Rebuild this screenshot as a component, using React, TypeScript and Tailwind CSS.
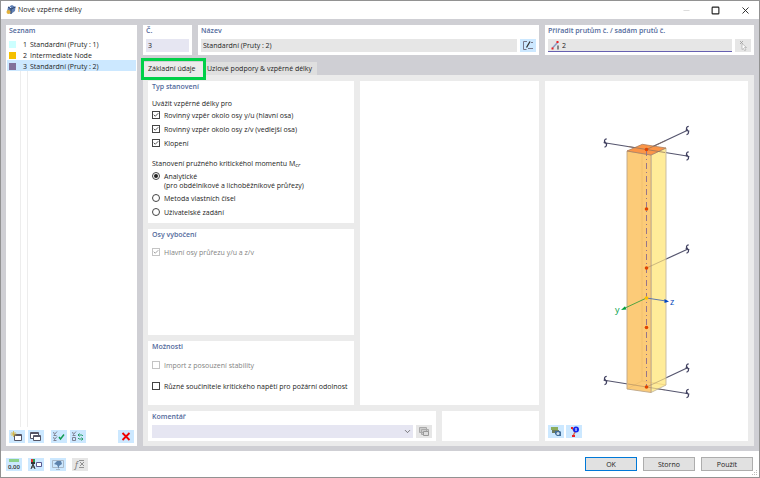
import type { ReactNode } from "react";
import { Check, ChevronDown, Minus, Square, X } from "lucide-react";

const members = [
  { id: 1, name: "Standardní (Pruty : 1)", color: "bg-[#ccffff]" },
  { id: 2, name: "Intermediate Node", color: "bg-[#f5c000]" },
  { id: 3, name: "Standardní (Pruty : 2)", color: "bg-[#83729a]" },
];

function Heading({ children }: { children: ReactNode }) {
  return <h2 className="font-semibold leading-[12px] text-[#52699b]">{children}</h2>;
}

function IconButton({ label, disabled, children }: { label: string; disabled?: boolean; children: ReactNode }) {
  return (
    <button
      aria-label={label}
      disabled={disabled}
      className="flex h-[13px] w-[16px] shrink-0 items-center justify-center bg-[#cce8ff] disabled:bg-[#e6e6e6]"
    >
      <svg viewBox="0 0 16 13" className="h-[13px] w-[16px]" fill="none">
        {children}
      </svg>
    </button>
  );
}

function CheckField({ label, checked, disabled }: { label: string; checked?: boolean; disabled?: boolean }) {
  return (
    <label className={disabled ? "flex h-[14px] items-center gap-[4px] text-[#838383]" : "flex h-[14px] items-center gap-[4px]"}>
      <span className="relative flex">
        <input
          type="checkbox"
          defaultChecked={checked}
          disabled={disabled}
          className="peer size-[8px] appearance-none border border-[#444] bg-white disabled:border-[#c4c4c4]"
        />
        <Check
          strokeWidth={3}
          className="pointer-events-none absolute inset-[1px] size-[6px] opacity-0 peer-checked:opacity-100"
        />
      </span>
      {label}
    </label>
  );
}

function RadioField({ label, checked }: { label: string; checked?: boolean }) {
  return (
    <label className="flex h-[14px] items-center gap-[4px]">
      <span className="relative flex">
        <input
          type="radio"
          name="moment"
          defaultChecked={checked}
          className="peer size-[8px] appearance-none rounded-full border border-[#444] bg-white"
        />
        <span className="pointer-events-none absolute inset-[2px] rounded-full bg-[#222] opacity-0 peer-checked:opacity-100" />
      </span>
      {label}
    </label>
  );
}

// Squiggle that closes a cut-off member
function BreakMark({ x, y }: { x: number; y: number }) {
  return (
    <path
      transform={`translate(${x} ${y})`}
      d="M1.2-4.2C-1-4-1.6-2-.4-.8L.4 .2C1.6 1.6 1 3.8-1 4.200M-1.800-.6L1.800 .8"
      stroke="#414160"
      strokeWidth="1.300"
    />
  );
}

function Preview() {
  return (
    <svg viewBox="545 81 203 340" className="w-full" fill="none" role="img" aria-label="Prut">
      <g stroke="#55556e" strokeWidth="1.200">
        <path d="M606 143L687 156M646.500 149.500L687 130.500" />
        <path d="M646.500 268L688 249" />
        <path d="M606 380.500L687 393.500M646.500 387L687 368" />
      </g>
      <path d="M651 155L666 148V385L651 392.500Z" fill="#ffeb94" fillOpacity=".95" stroke="#c4b8a0" strokeWidth=".9" />
      <path d="M627 151L651 155V392.500L627 389Z" fill="#fcc871" fillOpacity=".95" stroke="#bda688" strokeWidth=".9" />
      <path d="M642 145V381L627 389M642 381L666 385" stroke="#e0b060" strokeOpacity=".6" strokeWidth=".6" />
      <path d="M627 151L642.300 144.300L666 148L651 155Z" fill="#fb9547" stroke="#a98062" strokeWidth=".8" />
      <g stroke="#8a7060" strokeWidth=".7">
        <path d="M628 146.500L665 152.500M646.500 149.500L666 140.500" />
        <path d="M646.500 268L666 259M628 384L665 390M646.500 387L666 378" strokeOpacity=".55" />
      </g>
      <path d="M646.500 150V387" stroke="#97758a" strokeWidth="1" strokeDasharray="6 3 1 3" />
      <BreakMark x={605.5} y={143} />
      <BreakMark x={687.5} y={130.5} />
      <BreakMark x={687.5} y={156} />
      <BreakMark x={687.5} y={249} />
      <BreakMark x={605.5} y={380.5} />
      <BreakMark x={687.5} y={368} />
      <BreakMark x={687.5} y={393.5} />
      <path d="M646.500 298L624 308.500" stroke="#3f9f3a" strokeWidth=".9" />
      <path d="M621 310L625 306.200L626.400 309.600Z" fill="#00a03c" />
      <path d="M646.500 298L666 301" stroke="#4a6ab0" strokeWidth=".9" />
      <path d="M669 301.500L664.500 299V303Z" fill="#0044c0" />
      {[149.5, 209, 268, 327.5, 387].map((y) => (
        <circle key={y} cx="646.500" cy={y} r="1.800" fill="#e04400" />
      ))}
      <circle cx="646.500" cy="298" r="1.800" fill="#fbc000" />
      <text x="615" y="313" fontSize="9" fill="#00a04a">y</text>
      <text x="670" y="305" fontSize="9" fill="#0046b8">z</text>
    </svg>
  );
}

export default function App() {
  return (
    <main className="flex min-h-screen flex-col border border-[#929292] bg-white font-['Open_Sans','Noto_Sans',sans-serif] text-[7px] leading-[9px] text-[#1c1c1c]">
      <header className="flex h-[18px] items-center pl-[5px] pr-[8px]">
        <svg viewBox="0 0 10 10" className="mr-[2px] size-[10px]">
          <path d="M2 2L6 0L9.500 2L9 6L5 9L1 7Z" fill="#6181b5" />
          <path d="M2 2L5 4L9.500 2M5 4V9" stroke="#30466e" fill="none" />
          <circle cx="2.500" cy="7" r="2" fill="#e4b23a" />
          <path d="M3 1L5 3" stroke="#d4e3f6" />
        </svg>
        <h1 className="leading-[12px]">Nové vzpěrné délky</h1>
        <div className="ml-auto flex items-center gap-[20px]">
          <button aria-label="Minimalizovat" disabled><Minus size={9} strokeWidth={2} color="#d0d0d0" /></button>
          <button aria-label="Maximalizovat"><Square size={9} strokeWidth={3} color="#222" /></button>
          <button aria-label="Zavřít"><X size={11} strokeWidth={2} color="#222" /></button>
        </div>
      </header>

      <div className="flex flex-1 gap-[6px] bg-[#cfcfd4] px-[5px] pb-[5px] pt-[6px]">
        <aside className="flex w-[131px] shrink-0 flex-col bg-white">
          <div className="px-[3px]"><Heading>Seznam</Heading></div>
          <ul className="mx-px mt-px flex flex-1 flex-col">
            {members.map((m) => (
              <li key={m.id}>
                <button
                  aria-pressed={m.id === 3}
                  className="flex h-[11px] w-full items-center pl-[2px] pt-px text-left aria-pressed:bg-[#cce8ff]"
                >
                  <span className={`${m.color} size-[7px]`} />
                  <span className="w-[11px] text-right">{m.id}</span>
                  <span className="ml-[3px]">{m.name}</span>
                </button>
              </li>
            ))}
            <li aria-hidden className="ml-[13px] w-[8px] flex-1 border-x border-[#ededed]" />
          </ul>
          <div className="flex items-center gap-[3px] px-[3px] pb-[3px] pt-[3px]">
            <IconButton label="Nový">
              <path d="M5.500 4.500H12.500V10.500H5.500Z" fill="#fff" stroke="#555566" />
              <path d="M5.500 5.500H12.500" stroke="#555566" />
              <path d="M4.500 1V7M1.500 4H7.500M2.500 2L6.500 6M6.500 2L2.500 6" stroke="#d6b43a" strokeWidth=".8" />
            </IconButton>
            <IconButton label="Kopírovat">
              <path d="M2.500 2.500H10.500V8.500H2.500ZM2.500 3.500H10.500" fill="#fff" stroke="#555566" />
              <path d="M5.500 5.500H12.500V10.500H5.500ZM5.500 6.500H12.500" fill="#fff" stroke="#555566" />
            </IconButton>
            <span className="w-px" />
            <IconButton label="Vybrat vše">
              <path d="M2.500 2L3.500 4.500L6 1.500M2.500 5.500H5.500M2.500 7L3.500 9.500L6 6.500M2.500 10.500H5.500" stroke="#778" strokeWidth=".9" />
              <path d="M8 7L9.500 9L13 4.500" stroke="#139c52" strokeWidth="1.500" />
            </IconButton>
            <IconButton label="Obrátit výběr">
              <path d="M2.500 2L3.500 4.500L6 1.500M2.500 5.500H5.500M2.500 7.500H5.500V10.500H2.500Z" stroke="#778" strokeWidth=".9" />
              <path d="M8 5H12L13 6M9.500 3.500L8 5L9.500 6.500M13 9H9L8 8M11.500 7.500L13 9L11.500 10.500" stroke="#2ca06a" />
            </IconButton>
            <span className="flex-1" />
            <IconButton label="Smazat">
              <path d="M4.500 3L11.500 10M11.500 3L4.500 10" stroke="#f00000" strokeWidth="1.800" />
            </IconButton>
          </div>
        </aside>

        <section className="flex min-w-0 flex-1 flex-col">
          <div className="grid grid-cols-[49px_1fr_209px] gap-[6px]">
            <div className="bg-white px-[3px] pb-[3px]">
              <Heading><label htmlFor="number">Č.</label></Heading>
              <input id="number" defaultValue="3" className="mt-[2px] block h-[13px] w-full bg-[#e6e6f2] px-[2px]" />
            </div>
            <div className="bg-white px-[3px] pb-[3px]">
              <Heading><label htmlFor="name">Název</label></Heading>
              <div className="mt-[2px] flex gap-[3px]">
                <input id="name" defaultValue="Standardní (Pruty : 2)" className="h-[13px] min-w-0 flex-1 bg-[#e6e6e6] px-[2px]" />
                <IconButton label="Upravit název">
                  <path d="M7 2.500H3.500V10.500H6.500M8 9.500H13M11 3.500H13" stroke="#778" />
                  <path d="M6.500 8.500L10 2.500" stroke="#333" strokeWidth="1.300" />
                </IconButton>
              </div>
            </div>
            <div className="bg-white px-[3px] pb-[3px]">
              <Heading><label htmlFor="assigned">Přiřadit prutům č. / sadám prutů č.</label></Heading>
              <div className="mt-[2px] flex gap-[3px]">
                <div className="flex h-[13px] min-w-0 flex-1 items-center border-b border-[#6660b0] bg-[#e6e6e6] pl-[3px]">
                  <svg viewBox="0 0 10 10" className="mr-px size-[10px]" fill="none">
                    <path d="M1.500 8L7 2" stroke="#8c9cc4" strokeWidth="1.500" />
                    <path d="M7 5.500V9.500" stroke="#666" strokeWidth="1.500" />
                    <path d="M.5 7.500H2.500V9.500H.5ZM5.500 1H7.500V3H5.500Z" fill="#ef2020" />
                  </svg>
                  <input id="assigned" defaultValue="2" className="h-[11px] min-w-0 flex-1 bg-transparent" />
                </div>
                <IconButton label="Vybrat pruty" disabled>
                  <path d="M5 2L8 5M8 2L5 5" stroke="#999" strokeWidth=".8" />
                  <path d="M7 4.500L11.500 8.500H9.500L11 11L9.500 11.500L8.500 9.500L7 10.500Z" fill="#fff" stroke="#aaa" strokeWidth=".7" />
                </IconButton>
              </div>
            </div>
          </div>

          <div role="tablist" className="mt-[7px] flex h-[13px]">
            <div className="relative flex">
              <button role="tab" aria-selected className="w-[61px] bg-[#ebebeb] pl-[5px] text-left">Základní údaje</button>
              <span className="pointer-events-none absolute -bottom-[5px] -left-[2px] -right-[2px] -top-[4px] z-10 border-[3px] border-[#00d048]" />
            </div>
            <button role="tab" aria-selected={false} className="w-[113px] bg-[#dfdfdf] pl-[3px] text-left">
              Uzlové podpory &amp; vzpěrné délky
            </button>
          </div>

          <div className="grid flex-1 grid-cols-[1fr_203px] gap-[6px] bg-[#ebebeb] pb-[5px] pl-[5px] pr-[6px] pt-[6px]">
            <div className="flex flex-col gap-[6px]">
              <div className="grid flex-1 grid-cols-[206px_1fr] gap-[6px]">
                <div className="flex flex-col gap-[6px]">
                  <div className="h-[142px] bg-white px-[4px]">
                    <Heading>Typ stanovení</Heading>
                    <p className="mt-[6px]">Uvážit vzpěrné délky pro</p>
                    <div>
                      <CheckField label="Rovinný vzpěr okolo osy y/u (hlavní osa)" checked />
                      <CheckField label="Rovinný vzpěr okolo osy z/v (vedlejší osa)" checked />
                      <CheckField label="Klopení" checked />
                    </div>
                    <p className="mt-[9px]">
                      Stanovení pružného kritickéhol momentu M<span className="relative top-px text-[6px] italic">cr</span>
                    </p>
                    <RadioField label="Analytické" checked />
                    <p className="-mt-[2px] pl-[12px]">(pro obdélníkové a lichoběžníkové průřezy)</p>
                    <div className="mt-px">
                      <RadioField label="Metoda vlastních čísel" />
                      <RadioField label="Uživatelské zadání" />
                    </div>
                  </div>
                  <div className="flex-1 bg-white px-[4px]">
                    <Heading>Osy vybočení</Heading>
                    <div className="mt-[4px]">
                      <CheckField label="Hlavní osy průřezu y/u a z/v" checked disabled />
                    </div>
                  </div>
                  <div className="flex h-[64px] flex-col bg-white px-[4px]">
                    <Heading>Možnosti</Heading>
                    <div className="mt-[5px] flex flex-col gap-[7px]">
                      <CheckField label="Import z posouzení stability" disabled />
                      <CheckField label="Různé součinitele kritického napětí pro požární odolnost" />
                    </div>
                  </div>
                </div>
                <div className="bg-white" />
              </div>
              <div className="grid grid-cols-[1fr_97px] gap-[6px]">
                <div className="bg-white px-[4px] pb-[3px]">
                  <Heading><label htmlFor="comment">Komentář</label></Heading>
                  <div className="mt-[2px] flex gap-[3px]">
                    <div className="relative flex-1">
                      <select id="comment" className="block h-[13px] w-full appearance-none bg-[#e6e6f2] px-[2px]">
                        <option />
                      </select>
                      <ChevronDown size={9} color="#555" className="pointer-events-none absolute right-px top-[2px]" />
                    </div>
                    <IconButton label="Komentáře" disabled>
                      <path d="M3.500 2.500H10.500V7.500H3.500ZM5.500 4.500H12.500V9.500H5.500Z" fill="#ccc" stroke="#aaa" />
                      <path d="M7.500 6.500H12.500V10.500H7.500Z" fill="#ddd" stroke="#999" />
                    </IconButton>
                  </div>
                </div>
                <div className="bg-white" />
              </div>
            </div>
            <div className="flex flex-col bg-white">
              <Preview />
              <div className="mt-auto flex gap-[2px] px-[3px] pb-[3px]">
                <IconButton label="Uložit obrázek">
                  <path d="M3 2H10V5H3Z" fill="#8cad5c" />
                  <path d="M4 5H11V8H4Z" fill="#6f7d5d" />
                  <path d="M7 6H12L13 7V11H9L7 9Z" fill="#416d98" />
                  <circle cx="10" cy="8.500" r="1.500" fill="#cfe0ef" />
                </IconButton>
                <IconButton label="Informace">
                  <path d="M6 3L9 7L7 11" stroke="#d9705a" strokeWidth="1.500" />
                  <path d="M5 2H7V4H5ZM6 10H9V12H6Z" fill="#ee2020" />
                  <circle cx="10" cy="4.500" r="3" fill="#1227ee" />
                  <path d="M10 3V6" stroke="#fff" />
                </IconButton>
              </div>
            </div>
          </div>
        </section>
      </div>

      <footer className="relative flex h-[26px] items-center pl-[5px] pr-[6px]">
        <div className="flex gap-[6px]">
          <IconButton label="Jednotky">
            <path d="M3 1H13V4H3Z" fill="#8bd18b" />
            <text x="2" y="11" fontSize="6" fontWeight="600" fill="#333">0,00</text>
          </IconButton>
          <IconButton label="Zobrazení">
            <path d="M3 1H5V4H3Z" fill="#e03030" />
            <path d="M5 1H7V4H5Z" fill="#28a050" />
            <path d="M3 4H7V6H3Z" fill="#333" />
            <path d="M5 6L3 11M5 6L7 11M3.500 9H6.500" stroke="#333" />
            <path d="M8.500 4.500H13.500V8.500H8.500Z" fill="#fff" stroke="#5a5a90" />
          </IconButton>
          <IconButton label="Pohled">
            <path d="M2.500 2.500H13.500V9.500H2.500ZM6 11.500H10" stroke="#a8b8c8" />
            <path d="M4 6L7 3H11L12 6L9 8V11L7 7Z" fill="#5d83ad" />
          </IconButton>
          <IconButton label="Vzorec" disabled>
            <text x="3" y="10" fontSize="9" fontStyle="italic" fill="#777">f</text>
            <path d="M7 2.500H12M8 4L12 8M12 4L8 8M7 9.500H12" stroke="#888" strokeWidth=".9" />
          </IconButton>
        </div>
        <div className="ml-auto flex gap-[6px]">
          <button className="h-[14px] w-[52px] border border-[#0078d7] bg-[#e1e1e1]">OK</button>
          <button className="h-[14px] w-[52px] border border-[#adadad] bg-[#e1e1e1]">Storno</button>
          <button className="h-[14px] w-[52px] border border-[#adadad] bg-[#e1e1e1]">Použít</button>
        </div>
        <svg viewBox="0 0 6 6" className="absolute bottom-px right-px size-[6px]" fill="#bdbdbd">
          <path d="M4 0H5V1H4ZM2 2H3V3H2ZM4 2H5V3H4ZM0 4H1V5H0ZM2 4H3V5H2ZM4 4H5V5H4Z" />
        </svg>
      </footer>
    </main>
  );
}
